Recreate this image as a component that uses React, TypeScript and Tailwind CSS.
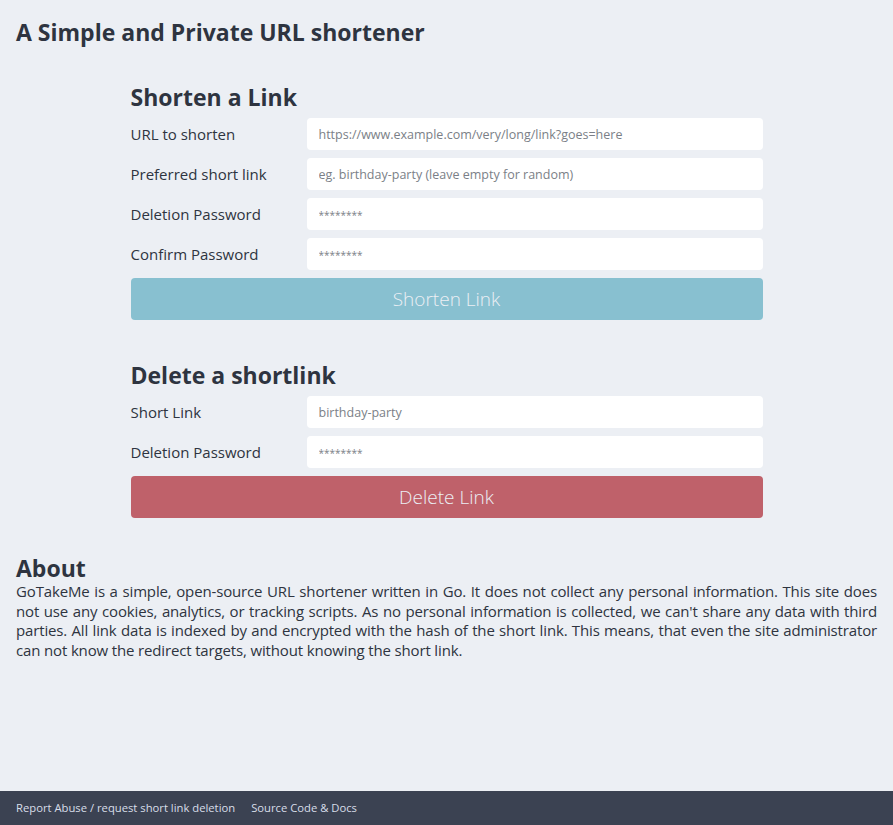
import { ReactNode } from "react";

const font = { fontFamily: '"Open Sans", "Noto Sans", sans-serif' };

interface FieldProps {
  label: string,
  placeholder: string,
  type?: string,
}

function Field({ label, placeholder, type = "text" }: FieldProps): ReactNode {
  const placeholderSize = type == "password" ? "placeholder:text-[10px]" : "placeholder:text-[12.5px]"
  return (
    <div className="flex items-center h-8">
      <label className="w-[176px] shrink-0 text-[15px] text-[#2e3440]">{label}</label>
      <input
        type={type}
        placeholder={placeholder}
        className={`flex-1 h-8 rounded bg-white px-3 text-[13px] text-[#2e3440] placeholder:text-[#7b7f87] outline-none ${placeholderSize}`}
      />
    </div>
  )
}

export default function App(): ReactNode {
  return (
    <div className="min-h-screen flex flex-col bg-[#eceff4] text-[#2e3440]" style={font}>
      <main className="flex-1 px-4">
        <h1 className="pt-[14px] text-[23px] font-bold leading-[36px]">A Simple and Private URL shortener</h1>

        <section className="mx-auto w-[632px] mt-[32px]">
          <h2 className="text-[23px] font-bold leading-[30px]">Shorten a Link</h2>
          <div className="mt-[6px] flex flex-col gap-2">
            <Field label="URL to shorten" placeholder="https://www.example.com/very/long/link?goes=here" />
            <Field label="Preferred short link" placeholder="eg. birthday-party (leave empty for random)" />
            <Field label="Deletion Password" placeholder="********" type="password" />
            <Field label="Confirm Password" placeholder="********" type="password" />
            <button className="h-[42px] rounded bg-[#88c0d0] text-[19px] font-light text-[#eceff4]">Shorten Link</button>
          </div>
        </section>

        <section className="mx-auto w-[632px] mt-[40px]">
          <h2 className="text-[23px] font-bold leading-[30px]">Delete a shortlink</h2>
          <div className="mt-[6px] flex flex-col gap-2">
            <Field label="Short Link" placeholder="birthday-party" />
            <Field label="Deletion Password" placeholder="********" type="password" />
            <button className="h-[42px] rounded bg-[#bf616a] text-[19px] font-light text-[#eceff4]">Delete Link</button>
          </div>
        </section>

        <section className="mt-[36px]">
          <h2 className="text-[23px] font-bold leading-[28px]">About</h2>
          <p className="text-[15px] leading-[19.5px] tracking-[-0.15px] text-justify">
            GoTakeMe is a simple, open-source URL shortener written in Go. It does not collect any personal information. This site does not use any cookies, analytics, or tracking scripts. As no personal information is collected, we can't share any data with third parties. All link data is indexed by and encrypted with the hash of the short link. This means, that even the site administrator can not know the redirect targets, without knowing the short link.
          </p>
        </section>
      </main>

      <footer className="h-[34px] flex items-center gap-4 px-4 bg-[#3b4252] text-[11.25px] text-[#d8dee9]">
        <a href="#">Report Abuse / request short link deletion</a>
        <a href="#">Source Code &amp; Docs</a>
      </footer>
    </div>
  )
}
